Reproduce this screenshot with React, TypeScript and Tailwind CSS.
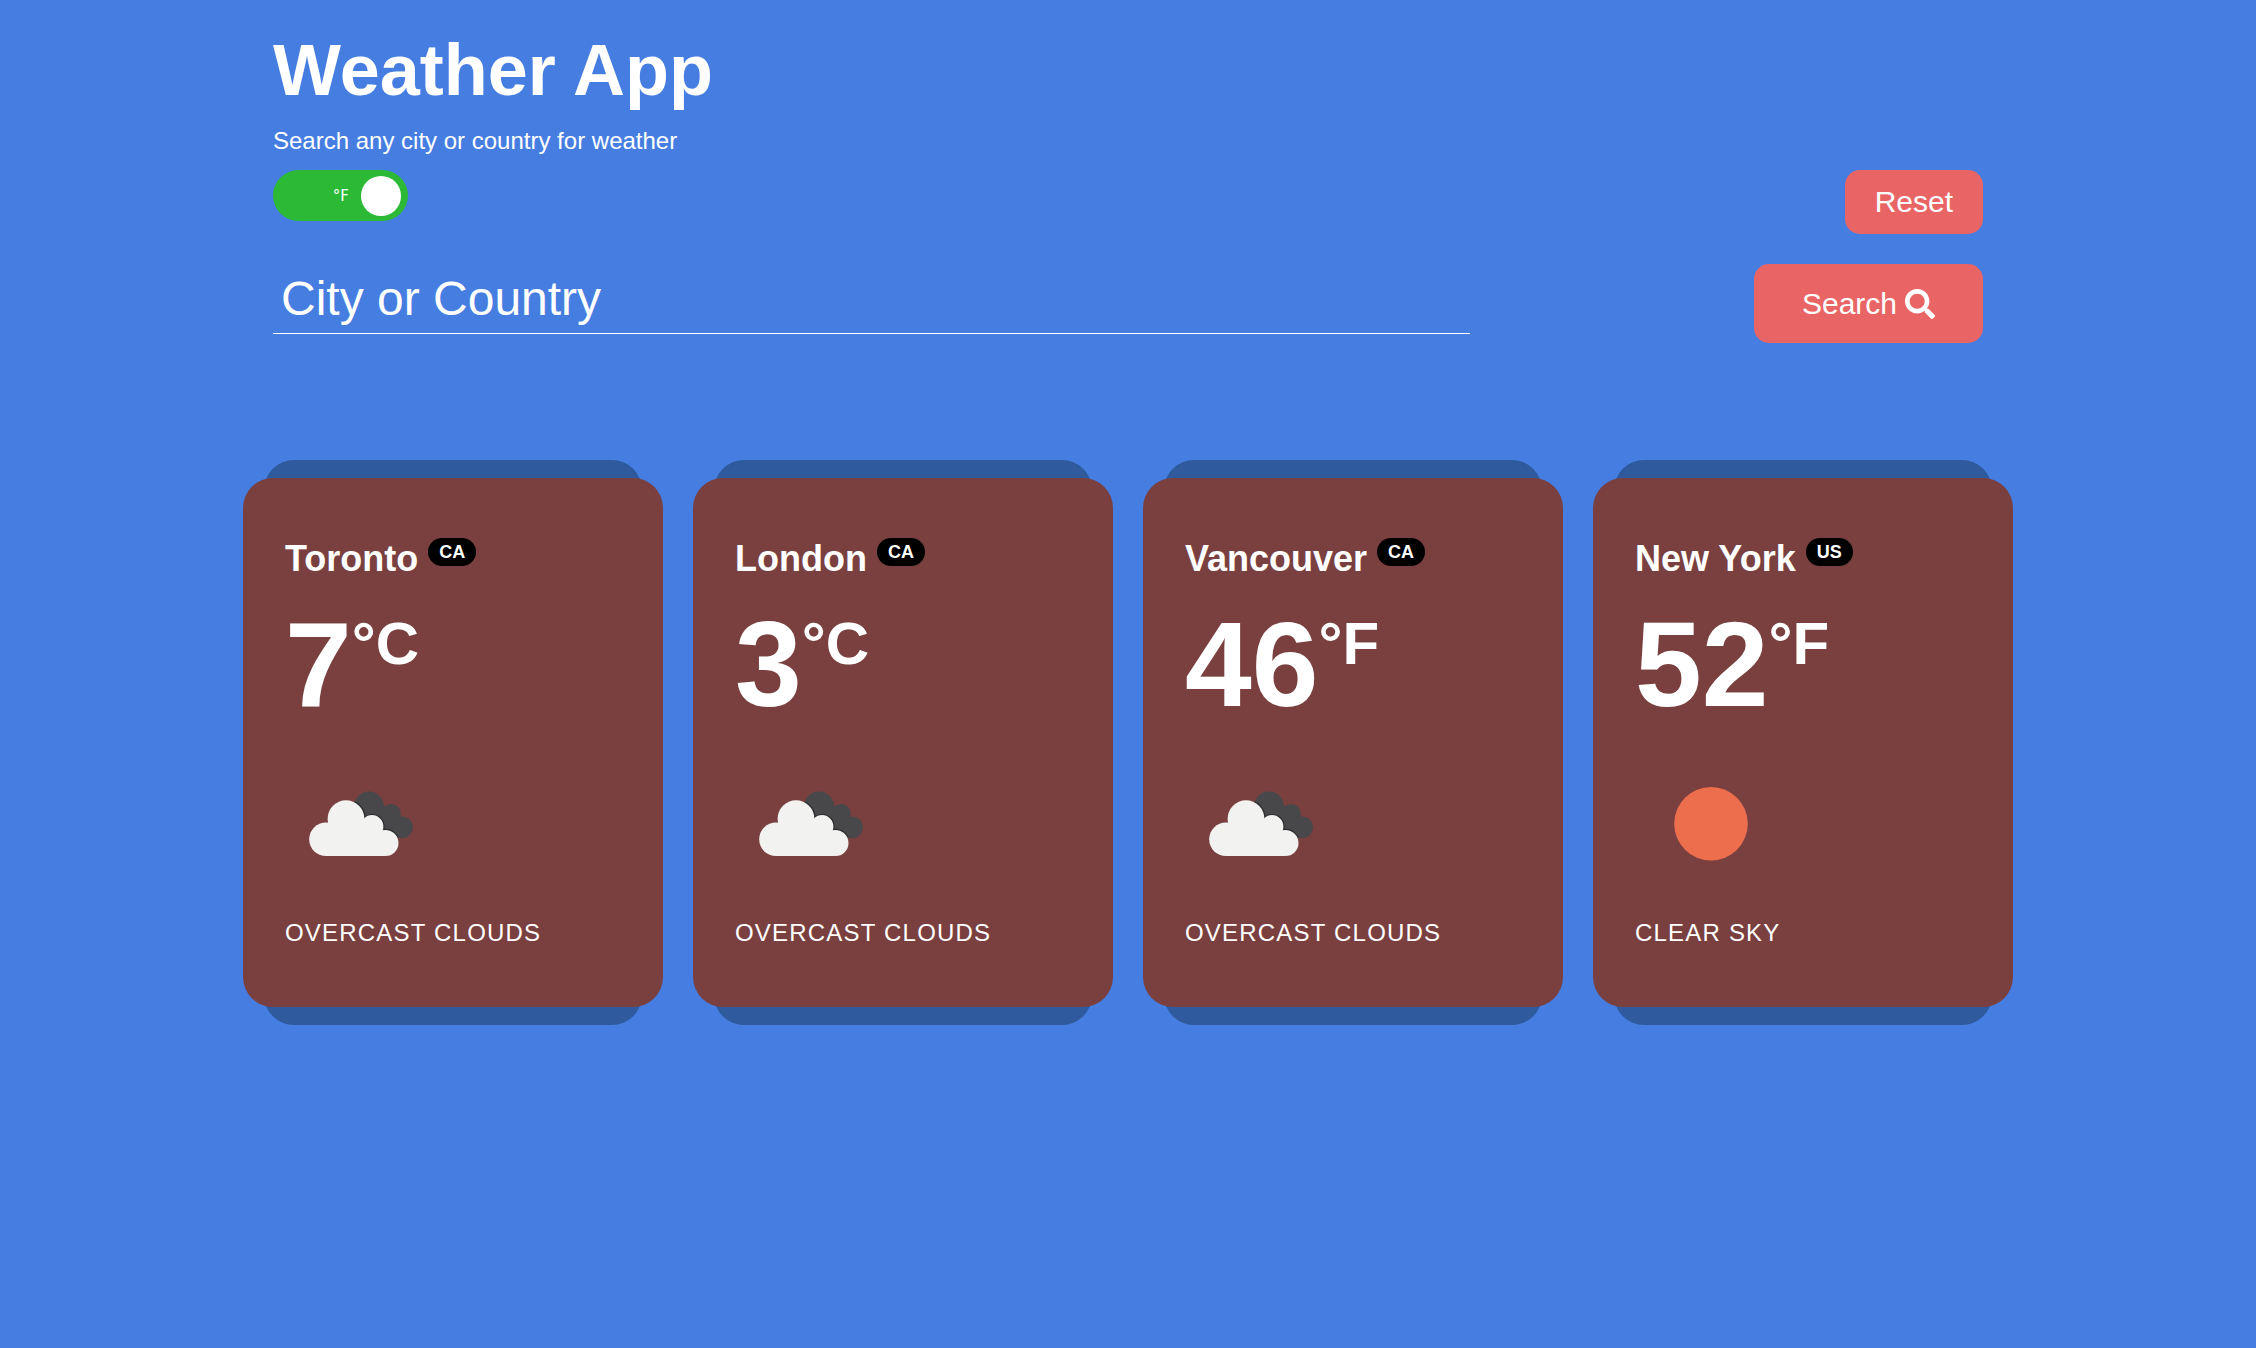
import { useId, useState } from "react";
import { FaSearch } from "react-icons/fa";

type Sky = "clouds" | "clear";

interface City {
  name: string;
  country: string;
  temp: number;
  unit: "C" | "F";
  sky: Sky;
  description: string;
}

const cities: City[] = [
  { name: "Toronto", country: "CA", temp: 7, unit: "C", sky: "clouds", description: "overcast clouds" },
  { name: "London", country: "CA", temp: 3, unit: "C", sky: "clouds", description: "overcast clouds" },
  { name: "Vancouver", country: "CA", temp: 46, unit: "F", sky: "clouds", description: "overcast clouds" },
  { name: "New York", country: "US", temp: 52, unit: "F", sky: "clear", description: "clear sky" },
];

function FrontCloud() {
  return (
    <>
      <circle cx="41" cy="90.3" r="16.8" />
      <circle cx="61" cy="69.7" r="18.4" />
      <circle cx="87" cy="77.5" r="11.4" />
      <circle cx="100.4" cy="94" r="13.1" />
      <path d="M41 107.1V90L60 70L87 78L99 82V107.1Z" />
    </>
  );
}

function BackCloud() {
  return (
    <>
      <circle cx="84" cy="57.5" r="15" />
      <circle cx="106" cy="64.7" r="9.8" />
      <circle cx="117" cy="78.3" r="10.9" />
      <path d="M84 57L99 56L106 64L117 70V89H90Z" />
    </>
  );
}

function CloudsIcon() {
  const id = useId();
  return (
    <svg viewBox="0 0 150 150" className="size-[150px]" role="img" aria-label="Overcast clouds">
      <defs>
        <clipPath id={id}>
          <BackCloud />
        </clipPath>
      </defs>
      <g fill="#48484a">
        <BackCloud />
      </g>
      <g clipPath={`url(#${id})`} fill="#2c2c2e" stroke="#2c2c2e" strokeWidth="2.4">
        <FrontCloud />
      </g>
      <g fill="#f2f2f0">
        <FrontCloud />
      </g>
    </svg>
  );
}

function SunIcon() {
  return (
    <svg viewBox="0 0 150 150" className="size-[150px]" role="img" aria-label="Clear sky">
      <circle cx="76" cy="74.7" r="36.8" fill="#ec6e4c" />
    </svg>
  );
}

function CityCard({ city }: { city: City }) {
  return (
    <li className="relative isolate">
      <div className="absolute inset-x-[5%] -inset-y-[18px] -z-10 rounded-[30px] bg-[#2f5a9d]" />
      <article className="rounded-[30px] bg-[#7a4040] px-[10%] py-[60px]">
        <h2 className="flex items-start gap-2.5 text-4xl leading-[42px] font-bold">
          {city.name}
          <span className="rounded-full bg-black px-[11px] text-lg leading-7">{city.country}</span>
        </h2>
        <p className="mt-6 flex items-start text-[120px] leading-[120px] font-bold">
          {city.temp}
          <span className="text-6xl leading-[80px]">°{city.unit}</span>
        </p>
        <figure className="mt-[25px]">
          {city.sky === "clouds" ? <CloudsIcon /> : <SunIcon />}
          <figcaption className="mt-5 text-2xl leading-7 tracking-wider uppercase">{city.description}</figcaption>
        </figure>
      </article>
    </li>
  );
}

function UnitToggle() {
  const [fahrenheit, setFahrenheit] = useState(true);
  return (
    <label
      className={`relative flex h-[51px] w-[135px] cursor-pointer items-center gap-3 rounded-full px-[7px] text-[15px] ${
        fahrenheit ? "justify-end bg-[#2cb936]" : "flex-row-reverse justify-end bg-[#e96565]"
      }`}
    >
      <input
        type="checkbox"
        role="switch"
        aria-label="Use Fahrenheit"
        className="sr-only"
        checked={fahrenheit}
        onChange={(e) => setFahrenheit(e.target.checked)}
      />
      <span className="font-[DejaVu_Sans,Verdana,sans-serif] leading-5">{fahrenheit ? "°F" : "°C"}</span>
      <span className="size-10 rounded-full bg-white" />
    </label>
  );
}

export default function App() {
  return (
    <div className="min-h-screen bg-[#457de1] font-['Liberation_Sans',Arial,sans-serif] text-white">
      <div className="mx-auto max-w-[1770px] pb-16">
        <header className="px-[30px] pt-7">
          <h1 className="text-7xl leading-[84px] font-bold">Weather App</h1>
          <p className="mt-3.5 text-2xl leading-[30px]">Search any city or country for weather</p>
          <div className="mt-3.5 flex items-start justify-between">
            <UnitToggle />
            <button type="button" className="h-16 rounded-[15px] bg-[#e96565] px-[30px] text-3xl">
              Reset
            </button>
          </div>
          <form className="mt-[30px] flex items-start justify-between" onSubmit={(e) => e.preventDefault()}>
            <input
              type="text"
              aria-label="City or Country"
              placeholder="City or Country"
              className="h-[70px] w-[70%] border-b border-white bg-transparent px-2 text-5xl leading-[56px] outline-none placeholder:text-white"
            />
            <button type="submit" className="flex h-[79px] items-center gap-2 rounded-[15px] bg-[#e96565] px-12 text-3xl">
              Search
              <FaSearch className="size-[30px]" aria-hidden="true" />
            </button>
          </form>
        </header>
        <ul className="mt-[135px] grid grid-cols-1 gap-x-[30px] gap-y-[66px] md:grid-cols-2 xl:grid-cols-4">
          {cities.map((city) => (
            <CityCard key={city.name} city={city} />
          ))}
        </ul>
      </div>
    </div>
  );
}
